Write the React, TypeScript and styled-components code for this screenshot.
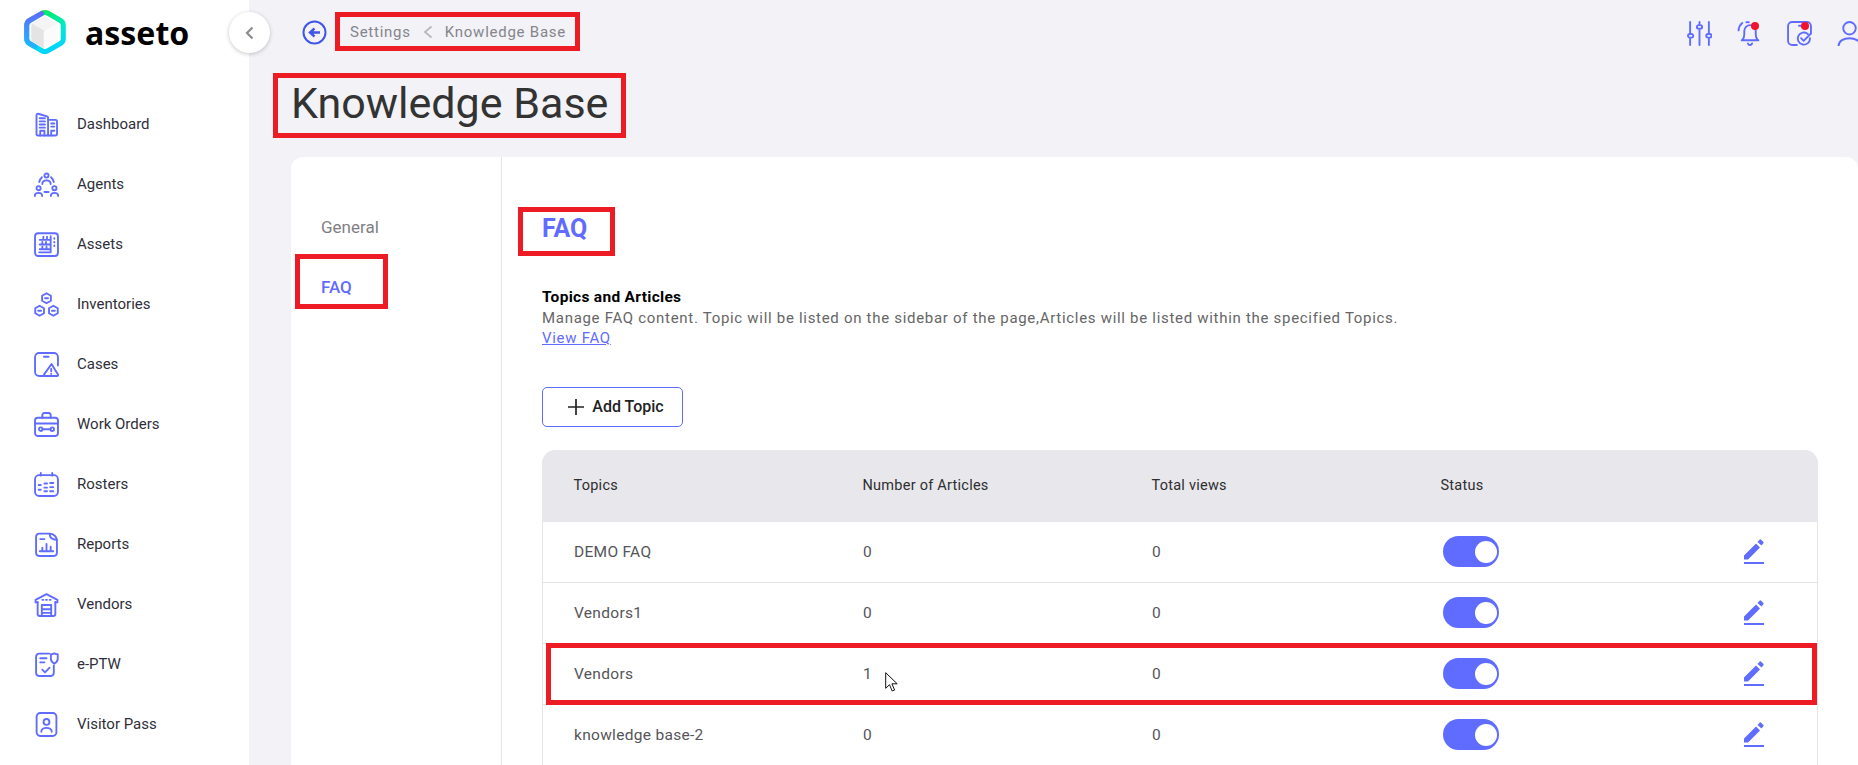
import React from 'react';
import styled, { createGlobalStyle } from 'styled-components';

const GlobalStyle = createGlobalStyle`
  html, body {
    margin: 0;
    padding: 0;
    height: 100%;
    overflow: hidden;
    background: #f2f2f7;
    font-family: Roboto, "Liberation Sans", sans-serif;
  }
`;

const Page = styled.div`
  position: relative;
  display: flex;
  width: 1858px;
  height: 765px;
  overflow: hidden;
`;

const Sidebar = styled.aside`
  position: relative;
  flex: 0 0 249px;
  background: #fff;
`;

const Brand = styled.div`
  display: flex;
  align-items: center;
  gap: 19px;
  height: 64px;
  padding-left: 24px;
`;

const BrandName = styled.span`
  font-family: "Noto Sans", sans-serif;
  font-size: 32px;
  font-weight: 700;
  color: #000;
`;

const CollapseButton = styled.button`
  position: absolute;
  top: 12px;
  right: -21px;
  width: 41px;
  height: 41px;
  display: flex;
  align-items: center;
  justify-content: center;
  padding: 0;
  border: none;
  border-radius: 50%;
  background: #fff;
  box-shadow: 0 1px 4px rgba(0, 0, 0, 0.22);
  z-index: 2;
`;

const Nav = styled.nav`
  display: flex;
  flex-direction: column;
  padding-top: 30px;
`;

const NavItem = styled.a`
  display: flex;
  align-items: center;
  gap: 18px;
  height: 60px;
  padding-left: 34px;
  font-size: 15px;
  color: #2f2f3a;
`;

const Main = styled.main`
  flex: 1;
  min-width: 0;
  display: flex;
  flex-direction: column;
`;

const TopBar = styled.header`
  display: flex;
  align-items: center;
  height: 64px;
  padding-left: 53px;
`;

const BackCircle = styled.span`
  display: flex;
  margin-right: 23px;
`;

const Crumbs = styled.div`
  display: flex;
  align-items: center;
  gap: 12px;
  font-size: 15px;
  letter-spacing: 0.75px;
  color: #85858b;
`;

const TopActions = styled.div`
  display: flex;
  align-items: center;
  gap: 25px;
  margin: 3px -4px 0 auto;
`;

const TopAction = styled.span`
  position: relative;
  display: flex;
`;

const Dot = styled.span`
  position: absolute;
  top: 1px;
  right: 3px;
  width: 8px;
  height: 8px;
  border-radius: 50%;
  background: #f5122f;
`;

const PageTitle = styled.h1`
  margin: 0;
  padding: 9px 0 0 42px;
  height: 93px;
  box-sizing: border-box;
  font-size: 43px;
  line-height: 60px;
  font-weight: 400;
  color: #333;
`;

const Card = styled.section`
  flex: 1;
  display: flex;
  margin-left: 42px;
  background: #fff;
  border-radius: 12px 12px 0 0;
  min-height: 0;
`;

const SideTabs = styled.div`
  flex: 0 0 211px;
  display: flex;
  flex-direction: column;
  gap: 40px;
  padding: 60px 0 0 30px;
  box-sizing: border-box;
  border-right: 1px solid #e5e5e8;
`;

const SideTab = styled.div<{ $active?: boolean }>`
  font-size: 17px;
  line-height: 20px;
  font-weight: ${(p) => (p.$active ? 500 : 400)};
  color: ${(p) => (p.$active ? '#5f6cff' : '#7f7f83')};
`;

const Content = styled.div`
  flex: 1;
  min-width: 0;
  padding: 56px 40px 0 40px;
`;

const SectionTitle = styled.h2`
  margin: 0;
  font-size: 25px;
  line-height: 32px;
  font-weight: 700;
  color: #5f6cff;
`;

const Intro = styled.div`
  margin-top: 42px;
  font-size: 15px;
  line-height: 20.5px;
  letter-spacing: 0.7px;
  color: #666;
`;

const IntroTitle = styled.div`
  font-size: 15.5px;
  font-weight: 700;
  letter-spacing: 0.3px;
  color: #000;
`;

const IntroLink = styled.a`
  color: #5f6cff;
  text-decoration: underline;
`;

const AddButton = styled.button`
  display: flex;
  align-items: center;
  justify-content: center;
  gap: 8px;
  width: 141px;
  height: 40px;
  margin: 38px 0 23px;
  padding: 0 0 0 7px;
  background: #fff;
  border: 1px solid #5f6cff;
  border-radius: 5px;
  font-family: inherit;
  font-size: 16px;
  font-weight: 500;
  color: #222;
`;

const Table = styled.div`
  border: solid #e5e5e8;
  border-width: 0 1px;
  border-radius: 14px 14px 0 0;
`;

const columns = '289px 289px 289px 1fr 73px';

const HeadRow = styled.div`
  display: grid;
  grid-template-columns: ${columns};
  align-items: center;
  height: 72px;
  margin: 0 -1px;
  padding-left: 31.5px;
  background: #e7e7ec;
  border-radius: 14px 14px 0 0;
  font-size: 14.5px;
  letter-spacing: 0.25px;
  color: #2e2e2e;
`;

const Row = styled.div`
  display: grid;
  grid-template-columns: ${columns};
  align-items: center;
  height: 61px;
  box-sizing: border-box;
  padding-left: 31px;
  border-bottom: 1px solid #e3e3e6;
  font-size: 15.5px;
  letter-spacing: 0.3px;
  color: #55555a;
`;

const Toggle = styled.span<{ $on?: boolean }>`
  display: flex;
  align-items: center;
  justify-content: ${(p) => (p.$on ? 'flex-end' : 'flex-start')};
  width: 56px;
  height: 31px;
  margin-left: 2px;
  padding: 0 2px;
  box-sizing: border-box;
  border-radius: 16px;
  background: #5f6cff;

  &::after {
    content: '';
    width: 22px;
    height: 22px;
    border-radius: 50%;
    background: #fff;
  }
`;

const EditIcon = styled.span`
  display: flex;
`;

// red marker boxes drawn on top of the screenshot
const Marker = styled.div<{ $x: number; $y: number; $w: number; $h: number }>`
  position: absolute;
  left: ${(p) => p.$x}px;
  top: ${(p) => p.$y}px;
  width: ${(p) => p.$w}px;
  height: ${(p) => p.$h}px;
  box-sizing: border-box;
  border: 5px solid #ed1c24;
  pointer-events: none;
  z-index: 3;
`;

const Cursor = styled.svg`
  position: absolute;
  left: 885px;
  top: 672px;
  z-index: 4;
`;

const Ic: React.FC<{ size?: number; children: React.ReactNode; sw?: number; color?: string }> = ({
  size = 25,
  children,
  sw = 1.8,
  color = '#5f6cff',
}) => (
  <svg
    width={size}
    height={size}
    viewBox="0 0 24 24"
    fill="none"
    stroke={color}
    strokeWidth={sw}
    strokeLinecap="round"
    strokeLinejoin="round"
    style={{ flex: 'none' }}
  >
    {children}
  </svg>
);

const Logo = () => (
  <svg width="42" height="46" viewBox="0 0 42 46" style={{ flex: 'none' }}>
    <defs>
      <linearGradient id="ring" x1="0.3" y1="0" x2="0.6" y2="1">
        <stop offset="0" stopColor="#08e85e" />
        <stop offset="0.5" stopColor="#00ebc8" />
        <stop offset="1" stopColor="#00d4ff" />
      </linearGradient>
      <linearGradient id="ringBlue" x1="0.5" y1="0" x2="0.5" y2="1">
        <stop offset="0" stopColor="#5f6cff" />
        <stop offset="1" stopColor="#1fb4ff" />
      </linearGradient>
    </defs>
    <path
      d="M18 4.300 Q21 2.600 24 4.300 L36.500 11.500 Q39.300 13.200 39.300 16.500 V29.500 Q39.300 32.800 36.500 34.500 L24 41.700 Q21 43.400 18 41.700 L5.500 34.500 Q2.700 32.800 2.700 29.500 V16.500 Q2.700 13.200 5.500 11.500 Z"
      fill="none"
      stroke="url(#ring)"
      strokeWidth="5"
    />
    <path
      d="M17.500 4.600 L5.500 11.500 Q2.700 13.200 2.700 16.500 V29.500 Q2.700 32.800 5.500 34.500 L11 37.700"
      fill="none"
      stroke="url(#ringBlue)"
      strokeWidth="5"
      strokeLinecap="round"
    />
    <g strokeWidth="1.500" strokeLinejoin="round">
      <path d="M20.500 8 L33 15.500 L20.500 23 L8 15.500 Z" fill="#f4f4f5" stroke="#f4f4f5" />
      <path d="M8 15.500 L20.500 23 V39 L8 31.500 Z" fill="#e4e4e5" stroke="#e4e4e5" />
      <path d="M33 15.500 L20.500 23 V39 L33 31.500 Z" fill="#fbfbfb" stroke="#fbfbfb" />
    </g>
  </svg>
);

const navItems: { label: string; icon: React.ReactNode }[] = [
  {
    label: 'Dashboard',
    icon: (
      <Ic>
        <path d="M13.500 22.500H3.600a1.200 1.200 0 0 1-1.200-1.200V2.900c0-.9.8-1.500 1.600-1.200l8.500 2.500c.6.2 1 .7 1 1.300v17Z" />
        <path d="M13.500 7.500h7a1.600 1.600 0 0 1 1.600 1.600v11.800a1.600 1.600 0 0 1-1.600 1.600h-7" />
        <path d="M5.500 6h5M5.500 9h5M5.500 12h5M5.500 15h5M6 22.500V18h4v4.500M16.500 11h3M16.500 14h3M16.500 22.500V18h3" />
      </Ic>
    ),
  },
  {
    label: 'Agents',
    icon: (
      <Ic>
        <circle cx="12" cy="3.400" r="2" />
        <path d="M8 11.500c0-4.600 8-4.600 8 0M5 9.600A9 9 0 0 1 7.600 5M19 9.600A9 9 0 0 0 16.400 5" />
        <circle cx="4.400" cy="15.500" r="2" />
        <circle cx="19.600" cy="15.500" r="2" />
        <path d="M.8 23c0-4 7-4 7 0M16.200 23c0-4 7-4 7 0M10 19.200h4" />
      </Ic>
    ),
  },
  {
    label: 'Assets',
    icon: (
      <Ic>
        <rect x="1" y="1.200" width="22" height="21.800" rx="3" />
        <path d="M5.500 7.500h10M5.500 12h10M5.500 16.500h10M16 4v15.500H5M9 4.500v2M12.500 4.500v2M8 9.500v1.500M11.500 9.500v1.500M8 14v1.500M12 14v1.500M19.500 6v.5M19.500 9.500v.5M19.500 13v.5" />
      </Ic>
    ),
  },
  {
    label: 'Inventories',
    icon: (
      <Ic>
        <path d="M12 1.200l4.200 2.400v4.800L12 10.800 7.800 8.400V3.600ZM5.400 13.200l4.200 2.400v4.800l-4.200 2.400-4.200-2.400v-4.800ZM18.600 13.200l4.200 2.400v4.800l-4.200 2.400-4.200-2.400v-4.800Z" />
        <path d="M10.600 6h2.800M4 18h2.800M17.200 18h2.800" />
      </Ic>
    ),
  },
  {
    label: 'Cases',
    icon: (
      <Ic>
        <path d="M9 23H5a4 4 0 0 1-4-4V5a4 4 0 0 1 4-4h14a4 4 0 0 1 4 4v8" />
        <path d="M9.500 4.500h4.500" />
        <path d="M16.800 11.500l6.200 10.200a.9.900 0 0 1-.8 1.300H10.400a.9.900 0 0 1-.8-1.300Z" />
        <path d="M16.500 16v2.500M16.500 20.800v.2" />
      </Ic>
    ),
  },
  {
    label: 'Work Orders',
    icon: (
      <Ic>
        <rect x="1" y="5.500" width="22" height="17.500" rx="2.500" />
        <path d="M8 5.500V3a2 2 0 0 1 2-2h4a2 2 0 0 1 2 2v2.500M1 11h22" />
        <circle cx="6.500" cy="16.500" r="1.700" />
        <circle cx="17.500" cy="16.500" r="1.700" />
        <path d="M8.200 16.500h7.600" />
      </Ic>
    ),
  },
  {
    label: 'Rosters',
    icon: (
      <Ic>
        <rect x="1" y="3" width="22" height="20" rx="4" />
        <path d="M6.500 1v2.500M17.500 1v2.500M4.500 12.500h2M10 11h2.500M15.500 10.500h3M4.500 17h2M10 15h2.500M15.500 14.500h3M10 18.500h2.500M15.500 18.500h3" />
      </Ic>
    ),
  },
  {
    label: 'Reports',
    icon: (
      <Ic>
        <path d="M15 1.500H5a3 3 0 0 0-3 3V20a3 3 0 0 0 3 3h14a3 3 0 0 0 3-3V7.500" />
        <path d="M15 1.500c0 3.500 1.500 6 7 6-.2-2.500-3-6-7-6Z" />
        <path d="M6 6.800h4M5.500 18.500h13M8 15v3.500M12 11.500v7M16 14v4.500" />
      </Ic>
    ),
  },
  {
    label: 'Vendors',
    icon: (
      <Ic>
        <path d="M1.500 7.500 12 2l10.500 5.500v2.500h-2M1.500 7.500v2.500h2" />
        <path d="M3.500 9.500V21a2 2 0 0 0 2 2h13a2 2 0 0 0 2-2V9.500" />
        <path d="M7.500 12.500h9V23M7.500 12.500V23M7.500 16.500h9M7.500 20h9M8 7.500h1M11.500 7.500h1M15 7.500h1" />
      </Ic>
    ),
  },
  {
    label: 'e-PTW',
    icon: (
      <Ic>
        <path d="M14.500 1.500H5a3 3 0 0 0-3 3V20a3 3 0 0 0 3 3h11a3 3 0 0 0 3-3v-7" />
        <path d="M6 6h6M6 10h4" />
        <path d="M19.500 1.200c1.500 1 3.300 1 3.300 1v4.300c0 2.500-2 4-3.300 4.800-1.300-.8-3.300-2.300-3.300-4.800V2.200s1.800 0 3.300-1Z" />
        <path d="M8 17l2.500 2.500L15 15" />
      </Ic>
    ),
  },
  {
    label: 'Visitor Pass',
    icon: (
      <Ic>
        <rect x="2.500" y="1" width="19" height="22" rx="3.500" />
        <circle cx="12" cy="9.500" r="2.800" />
        <path d="M7 19c0-5 10-5 10 0" />
      </Ic>
    ),
  },
];

const topics = [
  { name: 'DEMO FAQ', articles: 0, views: 0 },
  { name: 'Vendors1', articles: 0, views: 0 },
  { name: 'Vendors', articles: 1, views: 0 },
  { name: 'knowledge base-2', articles: 0, views: 0 },
];

export default function App() {
  return (
    <>
      <GlobalStyle />
      <Page>
        <Sidebar>
          <Brand>
            <Logo />
            <BrandName>asseto</BrandName>
          </Brand>
          <CollapseButton>
            <svg width="16" height="16" viewBox="0 0 16 16" fill="none" stroke="#8c8c90" strokeWidth="2.200">
              <path d="M10.500 2.500 5 8l5.500 5.500" />
            </svg>
          </CollapseButton>
          <Nav>
            {navItems.map((item) => (
              <NavItem key={item.label}>
                {item.icon}
                {item.label}
              </NavItem>
            ))}
          </Nav>
        </Sidebar>
        <Main>
          <TopBar>
            <BackCircle>
              <svg width="25" height="25" viewBox="0 0 25 25" fill="none" stroke="#4056e8">
                <circle cx="12.500" cy="12.500" r="11" strokeWidth="2" />
                <path d="M18 12.500H9M12.500 8.500 8 12.500l4.500 4" strokeWidth="2.400" />
              </svg>
            </BackCircle>
            <Crumbs>
              <span>Settings</span>
              <svg width="10" height="14" viewBox="0 0 10 14" fill="none" stroke="#b8b8bc" strokeWidth="1.800">
                <path d="M8.500 1.500 2 7l6.500 5.500" />
              </svg>
              <span>Knowledge Base</span>
            </Crumbs>
            <TopActions>
              <TopAction>
                <Ic>
                  <path d="M3 1v11M3 17v6M12 1v2M12 9v14M21 1v11M21 17v6" />
                  <rect x="1" y="12.500" width="5" height="3.400" rx="1.700" />
                  <rect x="9.500" y="4" width="5" height="3.400" rx="1.700" />
                  <rect x="18.500" y="12.500" width="5" height="3.400" rx="1.700" />
                </Ic>
              </TopAction>
              <TopAction>
                <Ic>
                  <path d="M5 18.500c1.400-1.500 2-3 2-5.500V9.500a5.500 5.500 0 0 1 11 0V13c0 2.500.6 4 2 5.500ZM4.500 18.500h16M10.500 21.500c.6 2 3.300 2 4 0" />
                  <path d="M1.500 9c.2-3 1.700-5.500 3.600-7M9 1.200c.8-.2 1.500-.2 2.300 0" />
                </Ic>
                <Dot />
              </TopAction>
              <TopAction>
                <Ic>
                  <path d="M9.500 23H5a4 4 0 0 1-4-4V5a4 4 0 0 1 4-4h14a4 4 0 0 1 4 4v7" />
                  <path d="M11.500 4.500h4" />
                  <path d="M22 16.500a5.800 5.800 0 1 1-2-4" />
                  <path d="M13.500 16.500l2.500 2.500 6.500-6.500" />
                </Ic>
                <Dot />
              </TopAction>
              <TopAction>
                <Ic>
                  <circle cx="12" cy="7" r="6" />
                  <path d="M1.500 24c0-10 21-10 21 0" />
                </Ic>
              </TopAction>
            </TopActions>
          </TopBar>
          <PageTitle>Knowledge Base</PageTitle>
          <Card>
            <SideTabs>
              <SideTab>General</SideTab>
              <SideTab $active>FAQ</SideTab>
            </SideTabs>
            <Content>
              <SectionTitle>FAQ</SectionTitle>
              <Intro>
                <IntroTitle>Topics and Articles</IntroTitle>
                <div>
                  Manage FAQ content. Topic will be listed on the sidebar of the page,Articles will be listed within the specified Topics.
                </div>
                <IntroLink>View FAQ</IntroLink>
              </Intro>
              <AddButton>
                <svg width="16" height="16" viewBox="0 0 16 16" stroke="#222" strokeWidth="1.700">
                  <path d="M8 0v16M0 8h16" />
                </svg>
                Add Topic
              </AddButton>
              <Table>
                <HeadRow>
                  <span>Topics</span>
                  <span>Number of Articles</span>
                  <span>Total views</span>
                  <span>Status</span>
                  <span />
                </HeadRow>
                {topics.map((t) => (
                  <Row key={t.name}>
                    <span>{t.name}</span>
                    <span>{t.articles}</span>
                    <span>{t.views}</span>
                    <Toggle $on />
                    <EditIcon>
                      <svg width="20" height="25" viewBox="0 0 20 25" fill="#5f6cff">
                        <path d="M0 16.500 12 4.500l4 4L4 20.500H0ZM13.500 3 15.800.6a.8.8 0 0 1 1.100 0l2.500 2.500a.8.800 0 0 1 0 1.100L17.500 6.500Z" />
                        <rect x="0" y="23" width="20" height="2" />
                      </svg>
                    </EditIcon>
                  </Row>
                ))}
              </Table>
            </Content>
          </Card>
        </Main>
        <Marker $x={335} $y={12} $w={245} $h={39} />
        <Marker $x={273} $y={73} $w={353} $h={65} />
        <Marker $x={295} $y={254} $w={93} $h={55} />
        <Marker $x={518} $y={207} $w={97} $h={49} />
        <Marker $x={546} $y={643} $w={1271} $h={62} />
        <Cursor width="13" height="20" viewBox="0 0 13 20">
          <path d="M.7.700v15.600l3.800-3.600 2.700 6.300 2.400-1-2.700-6.200h5.300Z" fill="#fff" stroke="#111" strokeWidth="1" />
        </Cursor>
      </Page>
    </>
  );
}
